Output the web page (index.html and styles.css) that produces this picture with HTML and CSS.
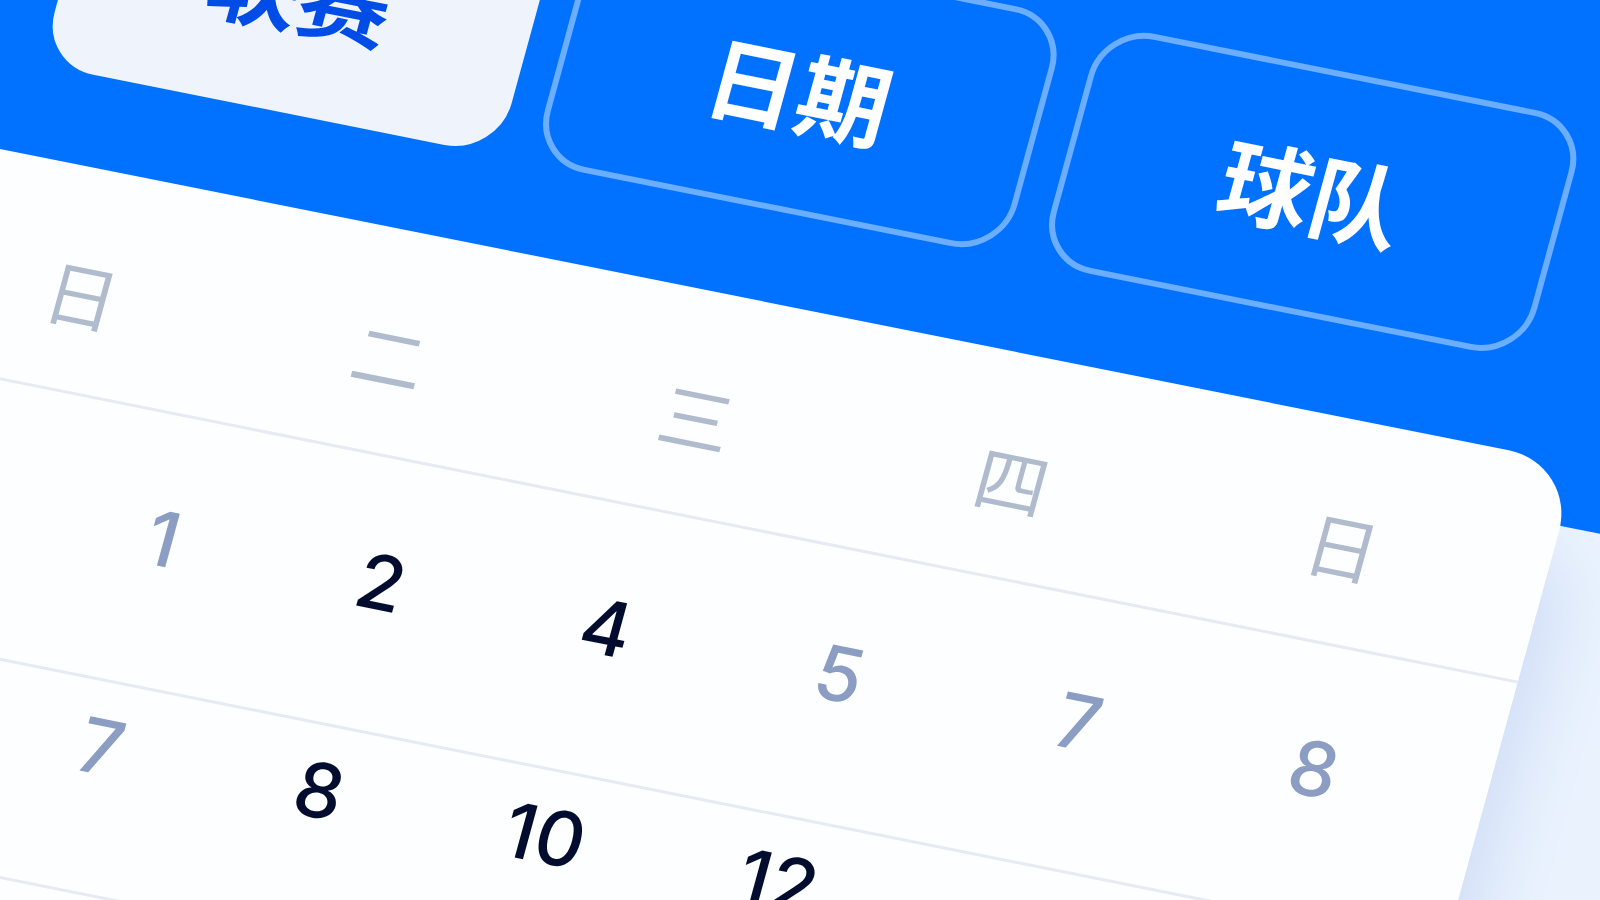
FILE: index.html
```
<!DOCTYPE html>
<html lang="zh-CN">
<head>
    <meta charset="UTF-8">
    <meta name="viewport" content="width=device-width, initial-scale=1.0">
    <title>赛程日历</title>
    <link rel="stylesheet" href="styles.css">
</head>
<body>
    <div class="scene">
        <header class="top">
            <nav class="tabs">
                <button type="button" class="tab tab-league active">联赛</button>
                <button type="button" class="tab tab-date">日期</button>
                <button type="button" class="tab tab-team">球队</button>
            </nav>
        </header>

        <main class="card">
            <table class="calendar">
                <thead>
                    <tr>
                        <th>日</th>
                        <th>二</th>
                        <th>三</th>
                        <th>四</th>
                        <th>日</th>
                    </tr>
                </thead>
                <tbody>
                    <tr class="week first">
                        <td>1</td>
                        <td class="match">2</td>
                        <td class="match">4</td>
                        <td>5</td>
                        <td>7</td>
                        <td>8</td>
                    </tr>
                    <tr class="week">
                        <td>7</td>
                        <td class="match">8</td>
                        <td class="match">10</td>
                        <td class="match">12</td>
                        <td></td>
                        <td></td>
                    </tr>
                </tbody>
            </table>
        </main>
    </div>
</body>
</html>
```

FILE: styles.css
```
* {
    box-sizing: border-box;
}
body {
    font-family: Inter, "Noto Sans CJK SC", sans-serif;
    margin: 0;
    height: 100vh;
    overflow: hidden;
    background-color: #e9f2fd;
}
/* the whole screen is seen at an angle */
.scene {
    width: 112vw;
    transform-origin: 0 0;
    transform: rotate(11.3deg) skewX(-4deg) translateY(-318px);
}
.top {
    background-color: #0072ff;
    padding: 125px 14vw 155px 56px;
}
.tabs {
    display: flex;
    gap: 34px;
}
.tab {
    flex: 31 1 0;
    padding: 60px 0 64px;
    border: 6px solid rgba(255, 255, 255, 0.42);
    border-radius: 54px;
    background: none;
    color: white;
    font-family: "Noto Sans CJK SC", sans-serif;
    font-size: 92px;
    font-weight: bold;
    line-height: 112px;
    cursor: pointer;
}
.tab-league {
    flex-grow: 30;
}
.tab-team {
    flex-grow: 32;
}
.tab.active {
    background-color: #eff4fc;
    border-color: #eff4fc;
    color: #004ce6;
}
.card {
    margin: -64px 9vw 0 0;
    min-height: 900px;
    background-color: #fdfeff;
    border-top-right-radius: 70px;
    box-shadow: 24px 90px 60px rgba(120, 150, 225, 0.2);
    position: relative;
}
.calendar,
.calendar thead,
.calendar tbody {
    display: block;
}
.calendar tr {
    display: grid;
    border-bottom: 3px solid #e6eaf2;
}
.calendar th,
.calendar td {
    padding: 0;
    text-align: center;
}
.calendar thead tr {
    grid-template-columns: 315fr 311fr 316fr 328fr 346fr;
    padding: 70px 32px 44px 0;
}
.calendar th {
    color: #b0bbcd;
    font-family: "Noto Sans CJK SC", sans-serif;
    font-size: 72px;
    font-weight: normal;
    line-height: 110px;
}
.calendar .week {
    grid-template-columns: 222fr 223fr 236fr 239fr 248fr 232fr;
    padding: 14px 62px 97px 184px;
}
.calendar .week.first {
    padding: 73px 58px 99px 189px;
}
.calendar td {
    color: #8b9dc2;
    font-size: 76px;
    font-weight: 500;
    line-height: 100px;
}
.calendar .match {
    color: #020c2e;
}
```
